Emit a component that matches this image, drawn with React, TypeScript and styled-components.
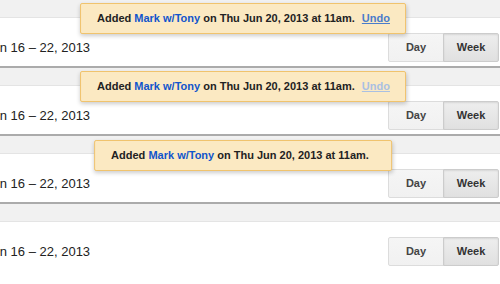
import React from "react";
import styled, { createGlobalStyle, css } from "styled-components";

const GlobalStyle = createGlobalStyle`
  html, body {
    margin: 0;
    padding: 0;
    background: #fff;
    overflow: hidden;
  }
  body {
    font-family: "Liberation Sans", Arial, sans-serif;
  }
`;

const Frame = styled.div`
  position: relative;
  height: 68px;
  box-sizing: border-box;
  border-bottom: 2px solid #ababab;

  &:last-child {
    border-bottom: none;
  }
`;

const TopStrip = styled.div`
  height: 17px;
  background: #f1f1f1;
  border-bottom: 1px solid #e4e4e4;
`;

const Body = styled.div`
  height: 48px;
  box-sizing: border-box;
  padding: 15px 1px 4px 0;
  display: flex;
  align-items: center;
  justify-content: space-between;
  background: #fff;
`;

const DateLabel = styled.div`
  margin-left: -14px;
  font-size: 13px;
  color: #222;
  white-space: nowrap;
`;

const ButtonGroup = styled.div`
  display: flex;
`;

const ToggleButton = styled.div<{ $active?: boolean }>`
  min-width: 56px;
  height: 29px;
  line-height: 27px;
  padding: 0 8px;
  box-sizing: border-box;
  text-align: center;
  font-size: 11px;
  font-weight: bold;
  color: #444;
  border: 1px solid #dcdcdc;
  background: linear-gradient(#f5f5f5, #f1f1f1);
  border-radius: 2px 0 0 2px;

  & + & {
    margin-left: -1px;
    border-radius: 0 2px 2px 0;
  }

  ${(p) =>
    p.$active &&
    css`
      background: linear-gradient(#eeeeee, #e0e0e0);
      border-color: #cccccc;
      box-shadow: inset 0 1px 2px rgba(0, 0, 0, 0.1);
      color: #333;
    `}
`;

const Toast = styled.div<{ $padRight?: number; $top?: number }>`
  position: absolute;
  top: ${(p) => p.$top ?? 3}px;
  left: 50%;
  transform: translateX(-50%);
  margin-left: -7px;
  height: 29px;
  line-height: 29px;
  padding: 0 ${(p) => p.$padRight ?? 15}px 0 16px;
  background: #fbe9c2;
  border: 1px solid #f0c36d;
  border-radius: 2px;
  box-shadow: 0 2px 4px rgba(0, 0, 0, 0.2);
  font-size: 11px;
  font-weight: bold;
  color: #222;
  white-space: nowrap;
`;

const EventLink = styled.span`
  color: #1155cc;
`;

const UndoLink = styled.span<{ $faded?: boolean }>`
  margin-left: 4px;
  color: ${(p) => (p.$faded ? "#a9c0e3" : "#4a7ccb")};
  text-decoration: underline;
`;

type ToastMode = "undo" | "fading" | "plain" | "none";

const frames: ToastMode[] = ["undo", "fading", "plain", "none"];

const Message = () => (
  <>
    Added <EventLink>Mark w/Tony</EventLink> on Thu Jun 20, 2013 at 11am.
  </>
);

const CalendarFrame: React.FC<{ mode: ToastMode }> = ({ mode }) => (
  <Frame>
    <TopStrip />
    <Body>
      <DateLabel>Jun 16 – 22, 2013</DateLabel>
      <ButtonGroup>
        <ToggleButton>Day</ToggleButton>
        <ToggleButton $active>Week</ToggleButton>
      </ButtonGroup>
    </Body>
    {mode === "undo" && (
      <Toast>
        <Message /> <UndoLink>Undo</UndoLink>
      </Toast>
    )}
    {mode === "fading" && (
      <Toast>
        <Message /> <UndoLink $faded>Undo</UndoLink>
      </Toast>
    )}
    {mode === "plain" && (
      <Toast $padRight={22} $top={4}>
        <Message />
      </Toast>
    )}
  </Frame>
);

const App: React.FC = () => (
  <>
    <GlobalStyle />
    {frames.map((mode, i) => (
      <CalendarFrame key={i} mode={mode} />
    ))}
  </>
);

export default App;
